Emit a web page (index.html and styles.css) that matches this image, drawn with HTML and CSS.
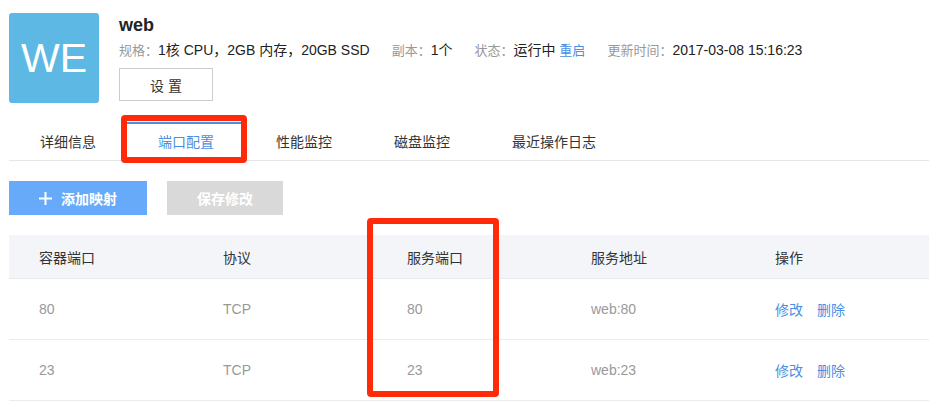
FILE: index.html
```html
<!DOCTYPE html>
<html lang="zh-CN">
<head>
<meta charset="utf-8">
<title>web</title>
<link rel="stylesheet" href="styles.css">
</head>
<body>
<div class="page">
  <div class="header">
    <div class="avatar">WE</div>
    <div class="info">
      <div class="title">web</div>
      <div class="meta">
        <span class="item"><span class="label">规格：</span>1核 CPU，2GB 内存，20GB SSD</span>
        <span class="item"><span class="label">副本：</span>1个</span>
        <span class="item"><span class="label">状态：</span>运行中 <a class="link">重启</a></span>
        <span class="item"><span class="label">更新时间：</span>2017-03-08 15:16:23</span>
      </div>
      <button class="btn-setting">设 置</button>
    </div>
  </div>

  <div class="tabs">
    <div class="tab">详细信息</div>
    <div class="tab active">端口配置</div>
    <div class="tab">性能监控</div>
    <div class="tab">磁盘监控</div>
    <div class="tab">最近操作日志</div>
  </div>

  <div class="actions">
    <button class="btn btn-primary">
      <svg class="plus" width="13" height="13" viewBox="0 0 13 13"><path d="M6.5 0v13M0 6.5h13" stroke="#fff" stroke-width="2"/></svg>
      添加映射
    </button>
    <button class="btn btn-disabled">保存修改</button>
  </div>

  <div class="table">
    <div class="row head">
      <div class="cell">容器端口</div>
      <div class="cell">协议</div>
      <div class="cell">服务端口</div>
      <div class="cell">服务地址</div>
      <div class="cell">操作</div>
    </div>
    <div class="row">
      <div class="cell">80</div>
      <div class="cell">TCP</div>
      <div class="cell">80</div>
      <div class="cell">web:80</div>
      <div class="cell ops"><a class="link">修改</a><a class="link">删除</a></div>
    </div>
    <div class="row">
      <div class="cell">23</div>
      <div class="cell">TCP</div>
      <div class="cell">23</div>
      <div class="cell">web:23</div>
      <div class="cell ops"><a class="link">修改</a><a class="link">删除</a></div>
    </div>
  </div>
</div>
<div class="mark mark-tab"></div>
<div class="mark mark-col"></div>
</body>
</html>
```
FILE: styles.css
```css
* { box-sizing: border-box; }
html, body { margin: 0; padding: 0; background: #fff; }
body {
  font-family: "Liberation Sans", Arial, "Noto Sans CJK SC", sans-serif;
  color: #333;
  font-size: 14px;
}
.page { padding: 13px 10px 0 9px; width: 939px; }

.header { display: flex; }
.avatar {
  width: 90px; height: 90px;
  background: #5db9e4;
  border-radius: 3px;
  color: #fff;
  font-size: 41px;
  display: flex; align-items: center; justify-content: center;
  margin-right: 20px;
}
.info { display: flex; flex-direction: column; align-items: flex-start; }
.title { font-size: 18px; font-weight: bold; line-height: 24px; color: #222; }
.meta { font-size: 14px; line-height: 20px; margin-top: 3px; display: flex; color: #222; }
.meta .item { margin-right: 22px; white-space: nowrap; }
.meta .label { color: #999; font-size: 13px; }
.link { color: #4a8fe2; cursor: pointer; }
.meta .link { font-size: 13px; }
.btn-setting {
  margin-top: 7px;
  width: 94px; height: 33px;
  border: 1px solid #ccc;
  background: #fff;
  font-family: inherit;
  font-size: 14px;
  color: #333;
  padding: 0;
}

.tabs {
  display: flex;
  margin-top: 19px;
  border-bottom: 1px solid #e6e6e6;
  width: 920px;
}
.tab {
  padding: 0 31px;
  line-height: 36px;
  border-top: 2px solid transparent;
  color: #333;
}
.tab.active { border-top-color: #4a8fe2; color: #4a8fe2; }

.actions { display: flex; gap: 20px; margin-top: 20px; }
.btn {
  height: 34px; border: none; padding: 0;
  font-family: inherit; font-size: 14px; font-weight: bold;
  color: #fff;
  display: flex; align-items: center; justify-content: center;
}
.btn-primary { width: 138px; background: #66aaf9; }
.btn-primary .plus { margin-right: 9px; }
.btn-disabled { width: 116px; background: #d9d9d9; }

.table { margin-top: 20px; width: 920px; }
.row {
  display: grid;
  grid-template-columns: repeat(5, 184px);
  height: 61px;
  align-items: center;
  border-bottom: 1px solid #e8ebf0;
  color: #999;
}
.row.head { height: 44px; background: #f4f5f9; color: #333; }
.cell { padding-left: 30px; }
.ops .link { margin-right: 14px; }

.mark {
  position: absolute;
  border: 6px solid #ff2a0a;
  border-radius: 4px;
}
.mark-tab { left: 121px; top: 115px; width: 126px; height: 48px; }
.mark-col { left: 367px; top: 218px; width: 132px; height: 179px; }
```
